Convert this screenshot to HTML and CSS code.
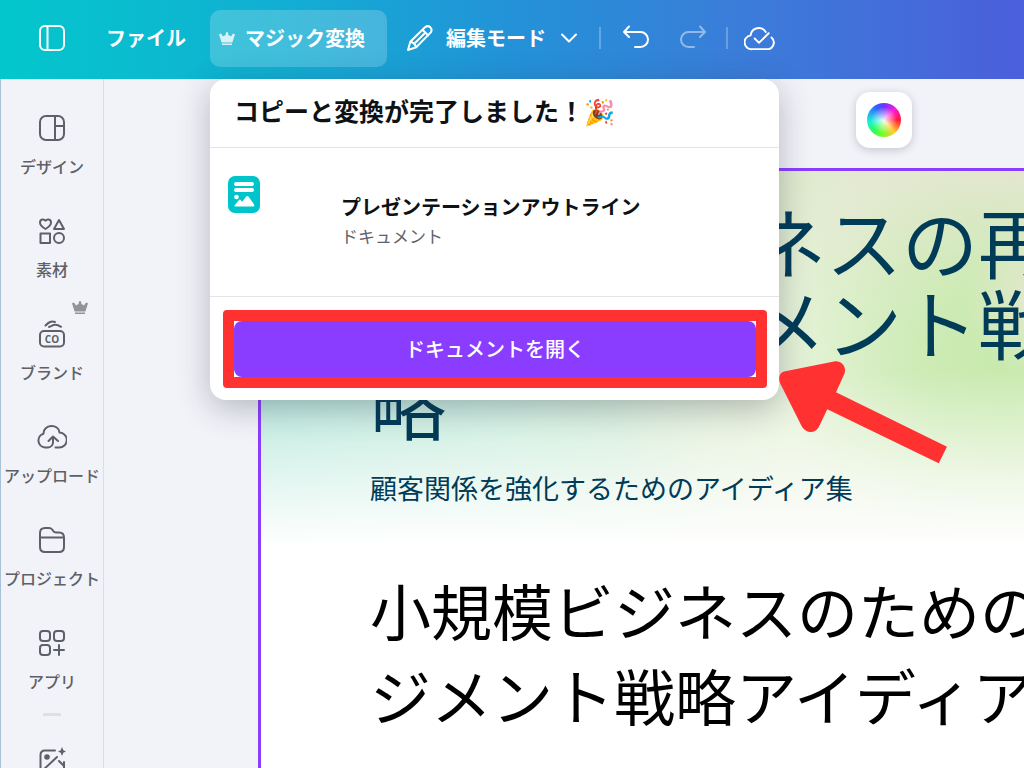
FILE: index.html
```html
<!DOCTYPE html>
<html lang="ja">
<head>
    <meta charset="UTF-8">
    <meta name="viewport" content="width=device-width, initial-scale=1.0">
    <title>プレゼンテーションアウトライン</title>
    <link rel="stylesheet" href="styles.css">
</head>
<body>
    <header class="topbar">
        <button class="icon-btn menu-btn" aria-label="メニュー">
            <svg width="28" height="28" viewBox="0 0 28 28"><rect x="2" y="2" width="24" height="24" rx="5"/><path d="M9.5 2v24"/></svg>
        </button>
        <button class="text-btn">ファイル</button>
        <div class="magic">
            <button class="text-btn magic-btn">
                <svg class="crown" width="16" height="15" viewBox="0 0 16 15"><path d="M0 3.200l2-.8 2 3.200L6.600 4 7 1.200h2L9.400 4 12 5.600l2-3.200 2 .8-2.600 8.300H2.600zM3 12.500h10V14H3z"/></svg>
                マジック変換
            </button>
            <div class="popover" role="dialog" aria-labelledby="popoverTitle">
                <h2 class="popover-title" id="popoverTitle">コピーと変換が完了しました！🎉</h2>
                <div class="result">
                    <svg class="doc-icon" width="32" height="37" viewBox="0 0 32 37">
                        <rect width="32" height="37" rx="7" fill="#00c4cc"/>
                        <rect x="6" y="6" width="20" height="4" rx="2" fill="#fff"/>
                        <rect x="6" y="12" width="20" height="4" rx="2" fill="#fff"/>
                        <circle cx="8.500" cy="21" r="2.300" fill="#fff"/>
                        <path d="M6.500 29.500l4.500-5.500q.8-.8 1.600 0l1.600 1.800 4-5.200q1.200-1.300 2.300 0l5.600 8q.8 2-1.200 2H7.600q-1.600 0-1.100-1.100z" fill="#fff"/>
                    </svg>
                    <div>
                        <div class="result-name">プレゼンテーションアウトライン</div>
                        <div class="result-type">ドキュメント</div>
                    </div>
                </div>
                <div class="popover-footer">
                    <div class="highlight">
                        <button class="open-btn">ドキュメントを開く</button>
                    </div>
                </div>
            </div>
        </div>
        <button class="text-btn mode-btn">
            <svg width="28" height="28" viewBox="0 0 28 28"><path d="M2 26l2.300-8.200L19 3.200q3-2.200 5.300 0t.5 5.200L10.200 23.200zM4.300 17.800q3.800.5 5.900 5.400M16.500 5.800l5.700 5.700M18.500 9.500L9 19"/></svg>
            編集モード
            <svg class="chevron" width="18" height="12" viewBox="0 0 18 12"><path d="M2 2.500l7 7 7-7"/></svg>
        </button>
        <span class="separator"></span>
        <button class="icon-btn" aria-label="元に戻す">
            <svg width="28" height="28" viewBox="0 0 28 28"><path d="M7 2.500L2 8l5 5M2 8h16.500a7.500 7.500 0 0 1 0 15H13"/></svg>
        </button>
        <button class="icon-btn redo-btn" aria-label="やり直す" disabled>
            <svg width="28" height="28" viewBox="0 0 28 28"><path d="M21 2.500L26 8l-5 5M26 8H9.500a7.500 7.500 0 0 0 0 15H15"/></svg>
        </button>
        <span class="separator"></span>
        <button class="icon-btn" aria-label="保存済み">
            <svg width="31" height="27" viewBox="0 0 32 28"><path d="M22.500 7.200A8.500 8.500 0 0 0 6.800 10.800 7 7 0 0 0 8.500 25H24a6.800 6.800 0 0 0 4.400-12M11 14l4.500 4.500L25.500 8.500"/></svg>
        </button>
    </header>

    <div class="workspace">
        <nav class="sidebar">
            <a class="nav-item" href="#design">
                <svg width="28" height="28" viewBox="0 0 28 28"><rect x="2" y="2" width="24" height="24" rx="6"/><path d="M17 2v24M17 12h9"/></svg>
                デザイン
            </a>
            <a class="nav-item" href="#elements">
                <svg width="28" height="28" viewBox="0 0 28 28"><path d="M7.500 12C4 10 2 8.200 2 5.500 2 2 6 1.600 7.500 3.800 9 1.600 13 2 13 5.500c0 2.700-2 4.500-5.500 6.500zM21 3l5 9H16z"/><rect x="2.500" y="16.500" width="9.500" height="9.500"/><circle cx="21" cy="21" r="5"/></svg>
                素材
            </a>
            <a class="nav-item" href="#brand">
                <svg class="crown" width="16" height="15" viewBox="0 0 16 15"><path d="M0 3.200l2-.8 2 3.200L6.600 4 7 1.200h2L9.400 4 12 5.600l2-3.200 2 .8-2.600 8.300H2.600zM3 12.500h10V14H3z"/></svg>
                <svg width="28" height="28" viewBox="0 0 28 28"><rect x="2" y="11" width="24" height="15.500" rx="4"/><path d="M7.500 5.500C11 2 13 .8 17 2M11 7c4-1.500 6-4 12-.2"/><text x="14" y="22.500">CO</text></svg>
                ブランド
            </a>
            <a class="nav-item" href="#uploads">
                <svg width="30" height="28" viewBox="0 0 30 28"><path d="M11 24.500H8A7 7 0 0 1 6.500 10.800C6 1 22 .5 22.500 9.500A7.500 7.500 0 0 1 22 24.500h-3.500M11 24.500q4.500-.5 5-5V14M11.500 18l4.500-4.500 5 4.500"/></svg>
                アップロード
            </a>
            <a class="nav-item" href="#projects">
                <svg width="28" height="28" viewBox="0 0 28 28"><path d="M2 12V7q0-5 5-5h4q2 0 3.200 1.500l1 1.500q1 1.500 3 1.500H21q5 0 5 5V21q0 5-5 5H7q-5 0-5-5V12M2 11.500h24"/></svg>
                プロジェクト
            </a>
            <a class="nav-item" href="#apps">
                <svg width="28" height="28" viewBox="0 0 28 28"><rect x="2" y="2" width="10" height="10" rx="3"/><rect x="16" y="2" width="10" height="10" rx="3"/><rect x="2" y="16" width="10" height="10" rx="3"/><path d="M21 16v10M16 21h10"/></svg>
                アプリ
            </a>
            <hr class="nav-divider">
            <a class="nav-item" href="#media" aria-label="マジック生成">
                <svg width="28" height="28" viewBox="0 0 28 28"><path d="M17 3.500H7q-4.500 0-4.500 4.500v13q0 5 4.500 5h14q5 0 5-5V15M3 25L19 10M21 14l5 5"/><circle class="solid" cx="9" cy="10" r="2.800"/><path class="solid" d="M24 0l1.300 3.200L28 4.500l-2.700 1.300L24 9l-1.300-3.200L20 4.500l2.700-1.300z"/></svg>
            </a>
        </nav>

        <main class="stage">
            <div class="stage-tools">
                <button class="color-btn" aria-label="背景色"><span class="color-wheel"></span></button>
            </div>
            <article class="page">
                <h1 class="page-title">小規模ビジネスの再構築<br>顧客マネジメント戦<br>略</h1>
                <p class="page-subtitle">顧客関係を強化するためのアイディア集</p>
                <p class="page-text">小規模ビジネスのための<br>ジメント戦略アイディア</p>
            </article>
        </main>
    </div>

    <svg class="arrow" width="168" height="103" viewBox="0 0 168 103"><path d="M5 10.500L55 .5c7-1.500 13 5 10.500 12L57 31.300 168 85.700l-8.300 16.600L48.300 48.300l-8.600 18c-3.500 6.500-13 6.500-17-1L1.500 23C-1 18 0 12 5 10.500z"/></svg>
</body>
</html>
```
FILE: styles.css
```css
:root {
    --purple: #8b3dff;
    --red: #ff3131;
    --ink: #0d1216;
    --navy: #003b57;
    --panel: #f2f3f8;
    --line: #e3e4e8;
    --icon: #5d6066;
}

* {
    box-sizing: border-box;
}

body {
    margin: 0;
    height: 100vh;
    display: flex;
    flex-direction: column;
    overflow: hidden;
    position: relative;
    font-family: "Noto Sans CJK JP", sans-serif;
    color: var(--ink);
    background: var(--panel);
}

h1, h2, p {
    margin: 0;
}

button {
    padding: 0;
    border: none;
    background: none;
    color: inherit;
    font: inherit;
    cursor: pointer;
}

svg {
    flex: none;
    fill: none;
    stroke: currentColor;
    stroke-width: 2;
    stroke-linecap: round;
    stroke-linejoin: round;
}

.crown {
    fill: currentColor;
    stroke: none;
}

/* Top bar */

.topbar {
    flex: none;
    display: flex;
    align-items: center;
    height: 79px;
    padding: 0 38px 3px;
    color: white;
    background: linear-gradient(90deg, #03c7cc 0%, #12aed3 28%, #2392d8 50%, #3c7bd9 74%, #4b5fdb 100%);
}

.icon-btn {
    display: flex;
    align-items: center;
}

.text-btn {
    display: flex;
    align-items: center;
    font-size: 20px;
    font-weight: 700;
    line-height: 28px;
    white-space: nowrap;
}

.menu-btn {
    margin-right: 40px;
}

.magic {
    position: relative;
    z-index: 2;
    margin: 0 19px 0 24px;
}

.magic-btn {
    gap: 10px;
    height: 57px;
    padding: 0 22px 0 9px;
    border-radius: 10px;
    background: rgba(255, 255, 255, 0.2);
}

.magic-btn .crown {
    opacity: 0.8;
}

.mode-btn {
    gap: 12px;
}

.mode-btn .chevron {
    margin-left: 2px;
}

.separator {
    width: 2px;
    height: 22px;
    margin: 0 21px;
    background: rgba(255, 255, 255, 0.25);
}

.redo-btn {
    margin-left: 29px;
    opacity: 0.45;
}

.redo-btn + .separator {
    margin: 0 16px 0 19px;
}

/* Popover under the magic button */

.popover {
    position: absolute;
    top: 69px;
    left: 0;
    width: 569px;
    border-radius: 16px;
    background: white;
    color: var(--ink);
    box-shadow: 0 8px 32px rgba(40, 44, 70, 0.3);
}

.popover-title {
    padding: 13px 24px 18px;
    border-bottom: 1px solid var(--line);
    font-size: 25px;
    font-weight: 700;
    line-height: 37px;
}

.result {
    display: flex;
    gap: 81px;
    height: 149px;
    padding: 28px 18px;
    border-bottom: 1px solid var(--line);
}

.doc-icon {
    stroke: none;
}

.result-name {
    padding-top: 15px;
    font-size: 20px;
    font-weight: 700;
    line-height: 32px;
}

.result-type {
    font-size: 17px;
    line-height: 26px;
    color: #5f6268;
}

.popover-footer {
    padding: 13px 12px 12px 13px;
}

.highlight {
    border: 11px solid var(--red);
    border-radius: 4px;
}

.open-btn {
    display: block;
    width: 100%;
    height: 56px;
    padding-bottom: 1px;
    border-radius: 8px;
    background: var(--purple);
    color: white;
    font-size: 20px;
    font-weight: 500;
}

/* Sidebar */

.workspace {
    flex: 1;
    min-height: 0;
    display: flex;
}

.sidebar {
    flex: none;
    width: 104px;
    padding-top: 16px;
    border-left: 1px solid #a9c1d6;
    border-right: 1px solid #dcdde3;
    overflow: hidden;
}

.nav-item {
    position: relative;
    display: flex;
    flex-direction: column;
    align-items: center;
    gap: 12px;
    height: 103px;
    padding-top: 19px;
    font-size: 16px;
    font-weight: 500;
    line-height: 24px;
    color: var(--icon);
    text-decoration: none;
    white-space: nowrap;
}

.nav-item .crown {
    position: absolute;
    top: -1px;
    right: 15px;
    opacity: 0.65;
}

.nav-item text {
    fill: currentColor;
    stroke: none;
    font: 700 10px "Open Sans", sans-serif;
    text-anchor: middle;
}

.nav-item .solid {
    fill: currentColor;
    stroke: none;
}

.nav-divider {
    width: 18px;
    height: 3px;
    margin: 0 auto 12px;
    border: none;
    background: #dfe0e5;
}

/* Canvas */

.stage {
    flex: 1;
    min-width: 0;
    display: flex;
    flex-direction: column;
    padding-left: 154px;
}

.stage-tools {
    display: flex;
    justify-content: flex-end;
    padding: 13px 112px 20px 0;
}

.color-btn {
    display: flex;
    align-items: center;
    justify-content: center;
    width: 56px;
    height: 56px;
    border-radius: 14px;
    background: white;
    box-shadow: 0 2px 8px rgba(60, 64, 90, 0.25);
}

.color-wheel {
    width: 34px;
    height: 34px;
    border-radius: 50%;
    background:
        radial-gradient(circle, rgba(255, 255, 255, 0.9) 0%, rgba(255, 255, 255, 0) 55%),
        conic-gradient(#6a35ff, #ff18d8 45deg, #ff1838 90deg, #ffd030 140deg, #6cff28 190deg, #25ff60 225deg, #18f0d8 265deg, #3060ff 330deg, #6a35ff);
}

.page {
    flex: 1;
    padding: 29px 0 0 109px;
    border-top: 3px solid var(--purple);
    border-left: 3px solid var(--purple);
    overflow: hidden;
    white-space: nowrap;
    background:
        linear-gradient(180deg, rgba(255, 255, 255, 0) 0, rgba(255, 255, 255, 0) 200px, rgba(255, 255, 255, 0.65) 310px, white 375px),
        radial-gradient(circle at 785px 130px, #e8e7d2 0, rgba(232, 231, 210, 0) 80px),
        radial-gradient(circle at 740px 190px, #c8eaae 0, rgba(200, 234, 174, 0.8) 80px, rgba(200, 234, 174, 0) 220px),
        radial-gradient(ellipse at 740px 0, #e9e6d6 0, rgba(233, 230, 214, 0) 240px),
        radial-gradient(circle at 560px 190px, #e8f4dc 0, rgba(232, 244, 220, 0) 220px),
        linear-gradient(90deg, #b0e6d8 0, #c3ebd9 250px, #dceaca 520px, #e0ecce 100%);
}

.page-title {
    font-size: 76px;
    font-weight: 400;
    line-height: 81px;
    color: var(--navy);
}

.page-subtitle {
    margin-top: 26px;
    font-size: 27px;
    line-height: 38px;
    color: var(--navy);
}

.page-text {
    margin-top: 60px;
    font-size: 61px;
    line-height: 85px;
    color: black;
}

/* Arrow drawn over the popover and the canvas */

.arrow {
    position: absolute;
    top: 361px;
    left: 779px;
    z-index: 3;
    fill: var(--red);
    stroke: none;
}
```
